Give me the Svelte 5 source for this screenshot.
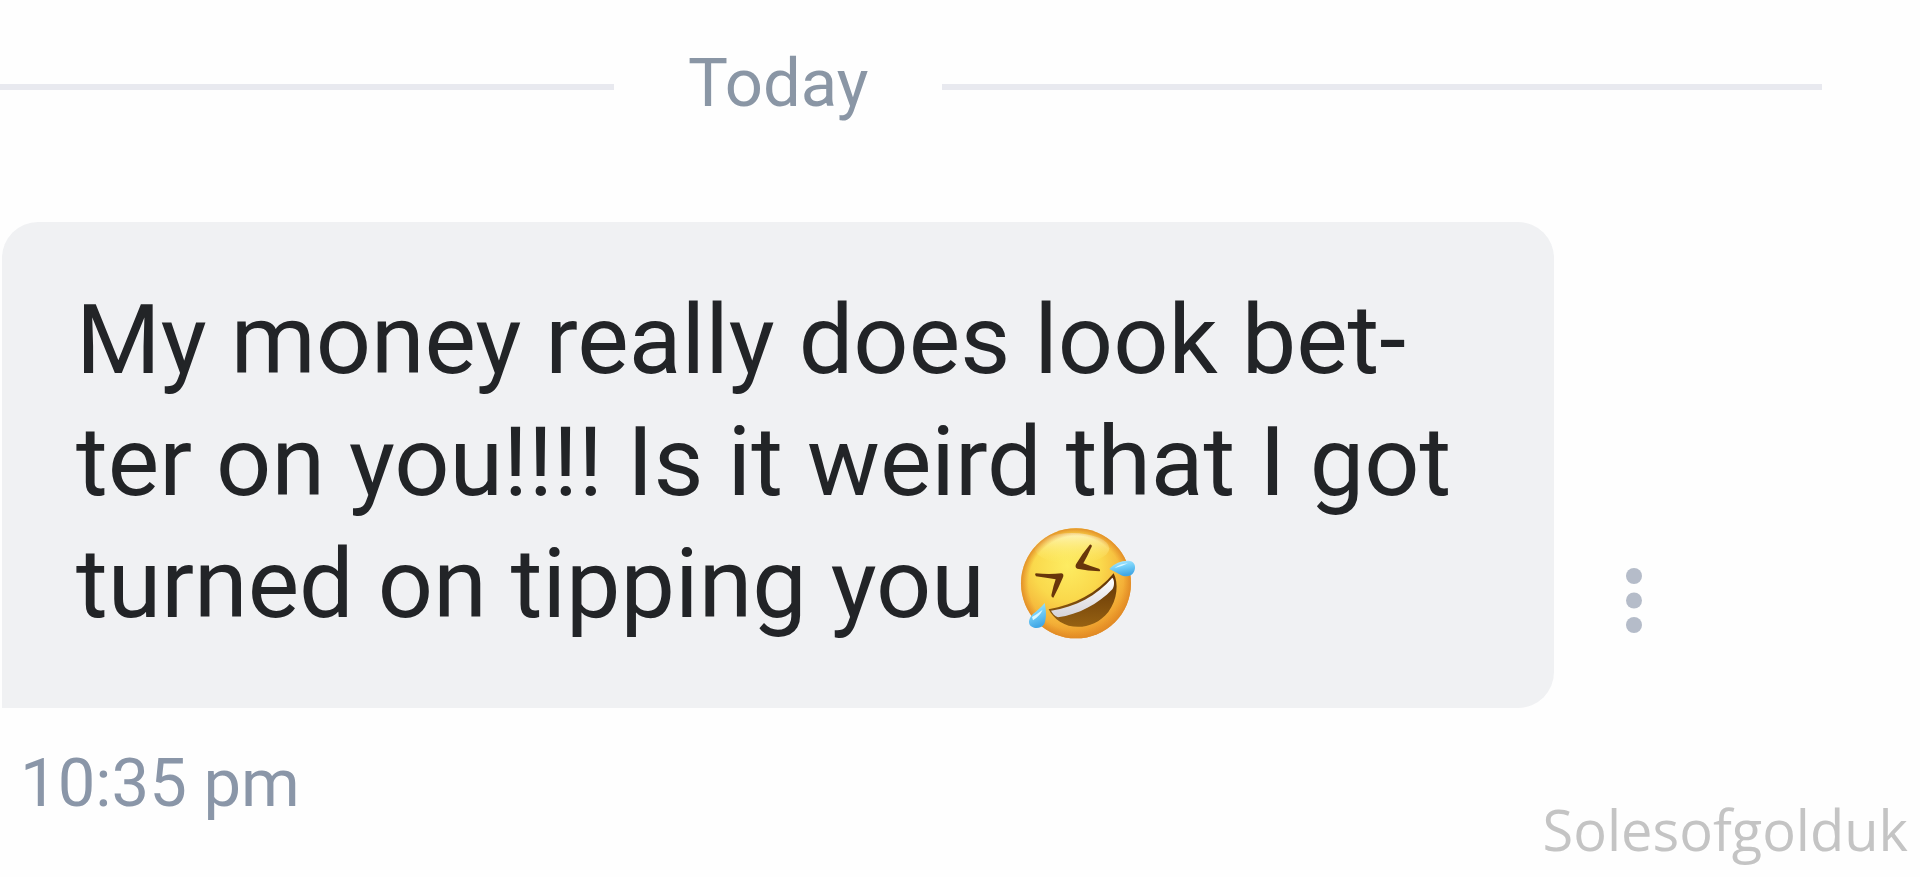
<script>
  const day = 'Today';
  const time = '10:35 pm';
  const author = 'Solesofgolduk';
</script>

<main class="chat">
  <div class="thread">
    <div class="divider"><span>{day}</span></div>

    <div class="message">
      <p class="bubble">
        My money really does look bet-<br />ter on you!!!! Is it weird that I got<br />turned on tipping you
        <svg class="emoji" viewBox="54 42 360 348" role="img" aria-label="Rolling on the floor laughing">
          <defs>
            <radialGradient id="face" cx="0.42" cy="0.34" r="0.68">
              <stop offset="0" stop-color="#fdec62" />
              <stop offset="0.45" stop-color="#fad94c" />
              <stop offset="0.78" stop-color="#f4b138" />
              <stop offset="1" stop-color="#e58a22" />
            </radialGradient>
            <linearGradient id="shine" x1="0" y1="0" x2="0" y2="1">
              <stop offset="0" stop-color="#fffbd8" stop-opacity="0.8" />
              <stop offset="1" stop-color="#fff36a" stop-opacity="0" />
            </linearGradient>
            <radialGradient id="rim" cx="0.5" cy="0.5" r="0.5">
              <stop offset="0.86" stop-color="#e8962a" stop-opacity="0" />
              <stop offset="1" stop-color="#e08a26" stop-opacity="0.9" />
            </radialGradient>
            <linearGradient id="mouth" x1="0" y1="0" x2="0" y2="1">
              <stop offset="0" stop-color="#5f3205" />
              <stop offset="1" stop-color="#966112" />
            </linearGradient>
            <linearGradient id="teeth" x1="0" y1="0" x2="0" y2="1">
              <stop offset="0" stop-color="#ffffff" />
              <stop offset="1" stop-color="#d5d3d8" />
            </linearGradient>
            <linearGradient id="tear" x1="0" y1="0" x2="0.3" y2="1">
              <stop offset="0" stop-color="#b5ecff" />
              <stop offset="0.5" stop-color="#74cff8" />
              <stop offset="1" stop-color="#42a8e6" />
            </linearGradient>
          </defs>
          <circle cx="228" cy="217" r="165" fill="url(#face)" />
          <ellipse cx="216" cy="112" rx="112" ry="46" fill="url(#shine)" />
          <circle cx="228" cy="217" r="165" fill="url(#rim)" />
          <path d="M146 295 C222 282 292 246 341 187 C356 217 353 265 325 303 C287 351 222 359 181 333 C165 323 153 309 146 295Z" fill="url(#mouth)" />
          <path d="M153 299 C226 288 290 254 337 200 C344 207 344 225 337 235 C294 280 235 311 174 319 C164 315 158 308 153 299Z" fill="url(#teeth)" />
          <path d="M107 187 Q148 191 184 187 Q194 189 188 201 Q174 234 160 260 Q154 260 154 253 Q160 224 167 205 Q139 201 108 196 Q103 190 107 187Z" fill="#68360b" />
          <path d="M273 101 Q278 104 273 111 Q261 138 250 157 Q274 167 297 173 Q303 178 298 181 Q264 180 232 173 Q224 170 228 160 Q246 128 267 104 Q270 100 273 101Z" fill="#68360b" />
          <path d="M328 174 C346 155 370 147 390 150 C405 153 409 169 402 182 C395 197 376 199 361 191 C350 185 339 180 328 174Z" fill="url(#tear)" />
          <path d="M344 171 Q362 158 384 157 Q369 165 344 171Z" fill="#d9f7ff" />
          <path d="M134 276 C139 298 140 323 133 338 C124 354 103 354 92 345 C83 335 87 321 99 309 C112 299 124 289 134 276Z" fill="url(#tear)" />
          <path d="M96 318 Q113 308 128 296 Q121 313 99 328Z" fill="#d9f7ff" />
        </svg>
      </p>
      <button class="more" type="button" aria-label="Message options">
        <svg viewBox="0 0 16 65" aria-hidden="true">
          <circle cx="8" cy="8" r="8" />
          <circle cx="8" cy="32.5" r="8" />
          <circle cx="8" cy="57" r="8" />
        </svg>
      </button>
    </div>

    <time class="time">{time}</time>
  </div>
  <footer class="credit">{author}</footer>
</main>

<style>
  :global(body) {
    margin: 0;
    background: #fefefe;
  }

  .chat {
    font-family: Roboto, sans-serif;
  }

  .thread {
    padding: 43px 98px 0 0;
  }

  .divider {
    display: flex;
    align-items: center;
    gap: 74px;
    color: #8a96a5;
    font-size: 67px;
    line-height: 80px;
  }

  .divider::before,
  .divider::after {
    content: '';
    height: 6px;
    margin-top: 8px;
    background: #e8e9ef;
    flex: 719 1 0;
  }

  .divider::before {
    flex-grow: 502;
  }

  .message {
    display: flex;
    align-items: flex-end;
    gap: 56px;
    margin: 99px 0 0 2px;
  }

  .bubble {
    box-sizing: border-box;
    flex: 0 1 1552px;
    margin: 0;
    padding: 57px 74px 63px;
    border-radius: 36px 36px 36px 0;
    background: #f0f1f3;
    color: #222427;
    font-size: 97px;
    line-height: 122px;
  }

  .emoji {
    width: 120px;
    height: 116px;
    margin: -8px 0 -8px 9px;
    vertical-align: -16px;
  }

  .more {
    display: flex;
    flex: none;
    margin-bottom: 59px;
    padding: 16px;
    border: 0;
    background: none;
    cursor: pointer;
  }

  .more svg {
    width: 16px;
    height: 65px;
    fill: #b5bcc9;
  }

  .time {
    display: block;
    margin: 35px 0 0 20px;
    color: #8a96a8;
    font-size: 67px;
    line-height: 80px;
  }

  .credit {
    margin-top: -32px;
    padding-right: 12px;
    color: #c4c4c4;
    font-family: 'Open Sans', sans-serif;
    font-size: 56px;
    line-height: 76px;
    text-align: right;
  }
</style>
